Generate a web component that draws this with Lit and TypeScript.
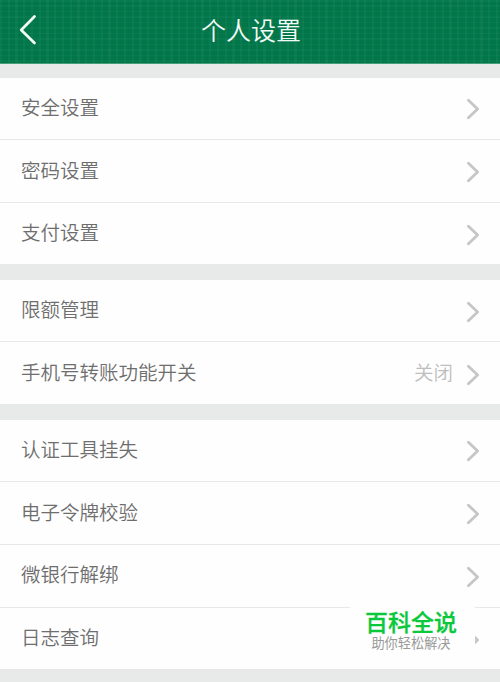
import { LitElement, html, css, nothing } from "lit";
import { customElement, property } from "lit/decorators.js";

interface Row {
  label: string;
  value?: string;
}

const groups: Row[][] = [
  [{ label: "安全设置" }, { label: "密码设置" }, { label: "支付设置" }],
  [{ label: "限额管理" }, { label: "手机号转账功能开关", value: "关闭" }],
  [{ label: "认证工具挂失" }, { label: "电子令牌校验" }, { label: "微银行解绑" }, { label: "日志查询" }],
];

@customElement("settings-row")
export class SettingsRow extends LitElement {
  @property() label = "";
  @property() value = "";

  static styles = css`
    :host {
      display: flex;
      align-items: center;
      box-sizing: border-box;
      height: 62.7px;
      padding: 1.2px 20px 0 21px;
      background: #fefefe;
      border-bottom: 1px solid #e8e8e8;
    }
    :host(:first-child) {
      height: 62.1px;
      padding-top: 0.2px;
    }
    .label,
    .value {
      font-size: 19.5px;
      line-height: 28px;
      font-weight: 350;
      padding-bottom: 3.6px;
      white-space: nowrap;
    }
    .label {
      flex: 1;
      color: #6e6e6e;
    }
    .value {
      color: #bebebe;
      margin-right: 13px;
    }
    .chevron {
      display: block;
      width: 14px;
      height: 22px;
      margin-top: 1.6px;
    }
  `;

  render() {
    return html`
      <span class="label">${this.label}</span>
      ${this.value ? html`<span class="value">${this.value}</span>` : nothing}
      <svg class="chevron" viewBox="0 0 14 22" fill="none" stroke="#c6c6c6" stroke-width="2.8" stroke-linecap="round" stroke-linejoin="round">
        <path d="M2.4 2.2 L11.6 11 L2.4 19.8" />
      </svg>
    `;
  }
}

@customElement("app-root")
export class AppRoot extends LitElement {
  static styles = css`
    :host {
      display: block;
      position: relative;
      height: 682px;
      overflow: hidden;
      background: #e8eae9;
      font-family: "Noto Sans CJK SC", sans-serif;
    }
    .header {
      display: grid;
      grid-template-columns: 60px 1fr 58px;
      align-items: center;
      box-sizing: border-box;
      height: 64px;
      padding-bottom: 4px;
      border-bottom: 1px solid #45a078;
      background:
        repeating-linear-gradient(90deg, #ffffff0a 0 2px, transparent 2px 7.75px),
        repeating-linear-gradient(180deg, #ffffff08 0 1.5px, transparent 1.5px 5.47px),
        #007649;
    }
    .back {
      display: block;
      width: 20px;
      height: 32px;
      margin-left: 18px;
    }
    .title {
      margin: -1px 0 0;
      text-align: center;
      color: #f2faf6;
      font-size: 25px;
      line-height: 36px;
      font-weight: 350;
    }
    .groups {
      display: flex;
      flex-direction: column;
      gap: 14.9px;
      padding-top: 14px;
    }
    .group {
      display: flex;
      flex-direction: column;
    }
    .badge {
      position: absolute;
      left: 350px;
      top: 602px;
      width: 125px;
      height: 64px;
      box-sizing: border-box;
      padding: 7px 3px 0 0;
      background: #fefefe;
      text-align: center;
    }
    .brand {
      color: #0ac83c;
      font-size: 23px;
      line-height: 24px;
      font-weight: 500;
      -webkit-text-stroke: 0.3px #0ac83c;
    }
    .slogan {
      margin-top: 3px;
      color: #999;
      font-size: 13.2px;
      line-height: 14px;
    }
  `;

  render() {
    return html`
      <header class="header">
        <svg class="back" viewBox="0 0 20 32" fill="none" stroke="#f4fbf7" stroke-width="2.7" stroke-linecap="round" stroke-linejoin="round">
          <path d="M16.5 2.5 L3.2 16 L16.5 29" />
        </svg>
        <h1 class="title">个人设置</h1>
      </header>
      <main class="groups">
        ${groups.map(
          (rows) => html`<section class="group">
            ${rows.map(
              (row) => html`<settings-row .label=${row.label} .value=${row.value ?? ""}></settings-row>`
            )}
          </section>`
        )}
      </main>
      <aside class="badge">
        <div class="brand">百科全说</div>
        <div class="slogan">助你轻松解决</div>
      </aside>
    `;
  }
}
